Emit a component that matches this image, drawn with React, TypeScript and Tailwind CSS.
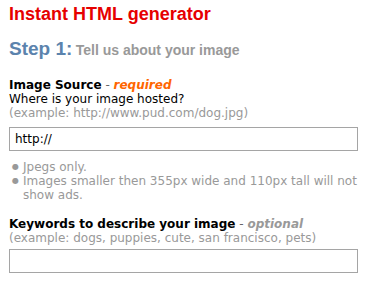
export default function App() {
  return (
    <div className="w-[376px] h-[290px] bg-white px-[9px] pt-[2px] font-['DejaVu_Sans',Verdana,sans-serif] text-[12px] leading-[14px] text-black">
      <h1 className="font-['Liberation_Sans',Arial,sans-serif] font-bold text-[18px] leading-[24px] text-[#e60000]">
        Instant HTML generator
      </h1>

      <h2 className="mt-[11px] font-['Liberation_Sans',Arial,sans-serif] font-bold leading-[24px]">
        <span className="text-[19px] text-[#5b83ad]">Step 1:</span>{" "}
        <span className="text-[14px] text-[#999999]">Tell us about your image</span>
      </h2>

      <form className="mt-[15px]" noValidate>
        <label htmlFor="src" className="block">
          <span className="font-bold">Image Source</span>
          <span className="text-[#666]"> - </span>
          <em className="font-bold text-[#ff6600]">required</em>
        </label>
        <p>Where is your image hosted?</p>
        <p className="text-[#999]">(example: http://www.pud.com/dog.jpg)</p>
        <input
          id="src"
          type="text"
          defaultValue="http://"
          className="mt-[7px] block w-[349px] h-[24px] border border-[#a5a5a5] px-[5px] text-[12px] text-black outline-none"
        />
        <ul className="mt-[9px] pl-[3px] text-[#999]">
          <li className="flex">
            <span className="w-[11px] shrink-0 text-[8px]">●</span>
            <span>Jpegs only.</span>
          </li>
          <li className="flex">
            <span className="w-[11px] shrink-0 text-[8px]">●</span>
            <span>Images smaller then 355px wide and 110px tall will not show ads.</span>
          </li>
        </ul>

        <label htmlFor="kw" className="block mt-[15px]">
          <span className="font-bold">Keywords to describe your image</span>
          <span className="text-[#666]"> - </span>
          <em className="font-bold text-[#999]">optional</em>
        </label>
        <p className="text-[#999]">(example: dogs, puppies, cute, san francisco, pets)</p>
        <input
          id="kw"
          type="text"
          className="mt-[4px] block w-[349px] h-[24px] border border-[#a5a5a5] px-[5px] text-[12px] outline-none"
        />
      </form>
    </div>
  )
}
